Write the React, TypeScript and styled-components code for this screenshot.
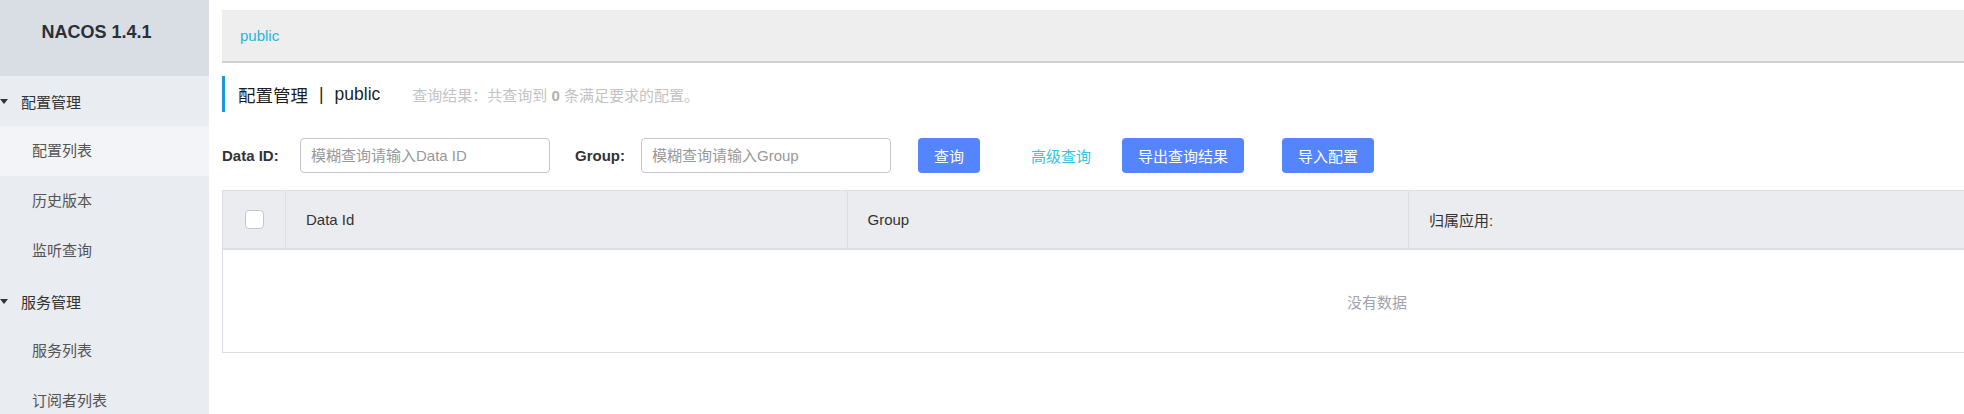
import React from 'react';
import styled, { createGlobalStyle } from 'styled-components';

const menu = [
  {
    title: '配置管理',
    items: [
      { name: '配置列表', active: true },
      { name: '历史版本' },
      { name: '监听查询' },
    ],
  },
  {
    title: '服务管理',
    items: [{ name: '服务列表' }, { name: '订阅者列表' }],
  },
];

// last column (operations) sits past the right edge of the window, left blank
const columns = ['Data Id', 'Group', '归属应用:', ''];

const App = () => {
  return (
    <Layout>
      <GlobalStyle />
      <Sidebar>
        <Brand>NACOS 1.4.1</Brand>
        {menu.map(group => (
          <React.Fragment key={group.title}>
            <MenuGroup>
              <Caret />
              {group.title}
            </MenuGroup>
            {group.items.map((item: { name: string; active?: boolean }) => (
              <MenuItem key={item.name} $active={item.active}>
                {item.name}
              </MenuItem>
            ))}
          </React.Fragment>
        ))}
      </Sidebar>

      <Main>
        <Breadcrumb>
          <BreadcrumbLink>public</BreadcrumbLink>
        </Breadcrumb>

        <PageTitle>
          <span>配置管理</span>
          <TitleSep>|</TitleSep>
          <span>public</span>
          <Summary>
            查询结果：共查询到 <strong>0</strong> 条满足要求的配置。
          </Summary>
        </PageTitle>

        <Filter>
          <FieldLabel $width={78}>Data ID:</FieldLabel>
          <Input placeholder="模糊查询请输入Data ID" $gap={25} />
          <FieldLabel $width={66}>Group:</FieldLabel>
          <Input placeholder="模糊查询请输入Group" $gap={27} />
          <Button $gap={51}>查询</Button>
          <TextLink $gap={31}>高级查询</TextLink>
          <Button $gap={38}>导出查询结果</Button>
          <Button>导入配置</Button>
        </Filter>

        <Table>
          <colgroup>
            <col style={{ width: 63 }} />
            {columns.map((c, i) => (
              <col key={i} />
            ))}
          </colgroup>
          <thead>
            <tr>
              <HeadCell>
                <Checkbox />
              </HeadCell>
              {columns.map((c, i) => (
                <HeadCell key={i}>{c}</HeadCell>
              ))}
            </tr>
          </thead>
          <tbody>
            <tr>
              <EmptyCell colSpan={columns.length + 1}>没有数据</EmptyCell>
            </tr>
          </tbody>
        </Table>
      </Main>
    </Layout>
  );
};

const GlobalStyle = createGlobalStyle`
  html, body {
    margin: 0;
    padding: 0;
    overflow: hidden;
    background: #fff;
    font-family: "Liberation Sans", "Noto Sans CJK SC", sans-serif;
  }
`;

const Layout = styled.div`
  display: flex;
  height: 414px;
  overflow: hidden;
`;

const Sidebar = styled.aside`
  width: 209px;
  flex-shrink: 0;
  background: #e9ecf1;
`;

const Brand = styled.div`
  height: 76px;
  box-sizing: border-box;
  padding: 22px 16px 0 0;
  line-height: 21px;
  text-align: center;
  font-size: 18px;
  font-weight: bold;
  color: #2b2f36;
  background: #d9dee5;
`;

const MenuGroup = styled.div`
  display: flex;
  align-items: center;
  height: 50px;
  font-size: 15px;
  color: #333;
`;

const Caret = styled.span`
  width: 0;
  height: 0;
  margin-right: 13px;
  border-left: 4.5px solid transparent;
  border-right: 4.5px solid transparent;
  border-top: 5px solid #333;
`;

const MenuItem = styled.div<{ $active?: boolean }>`
  height: 50px;
  line-height: 50px;
  padding-left: 32px;
  font-size: 15px;
  color: #555;
  background: ${p => (p.$active ? '#f3f4f7' : 'transparent')};
`;

const Main = styled.main`
  flex: 1;
  min-width: 0;
  padding: 10px 0 0 13px;
`;

const Breadcrumb = styled.div`
  width: 2400px;
  height: 51px;
  padding-left: 18px;
  display: flex;
  align-items: center;
  background: #eee;
  border-bottom: 2px solid #d0d0d0;
`;

const BreadcrumbLink = styled.a`
  font-size: 15px;
  color: #26b6dc;
  cursor: pointer;
`;

const PageTitle = styled.div`
  display: flex;
  align-items: center;
  height: 36px;
  margin-top: 13px;
  padding-left: 13px;
  border-left: 3px solid #1a9bd7;
  font-size: 17.5px;
  color: #1f1f1f;
`;

const TitleSep = styled.span`
  margin: 0 11px;
`;

const Summary = styled.span`
  margin-left: 32px;
  font-size: 15px;
  color: #c3c3c3;

  strong {
    color: #b0b0b0;
  }
`;

const Filter = styled.div`
  display: flex;
  align-items: center;
  margin-top: 26px;
  height: 35px;
`;

const FieldLabel = styled.label<{ $width: number }>`
  width: ${p => p.$width}px;
  flex-shrink: 0;
  font-size: 15px;
  font-weight: bold;
  color: #333;
`;

const Input = styled.input<{ $gap?: number }>`
  width: 250px;
  height: 35px;
  box-sizing: border-box;
  margin-right: ${p => p.$gap || 0}px;
  padding: 0 10px;
  border: 1px solid #c4c6cf;
  border-radius: 4px;
  font-family: inherit;
  font-size: 15px;
  color: #333;
  outline: none;

  &::placeholder {
    color: #999;
  }
`;

const Button = styled.button<{ $gap?: number }>`
  height: 35px;
  padding: 0 16px;
  margin-right: ${p => p.$gap || 0}px;
  border: none;
  border-radius: 4px;
  background: #5584ff;
  color: #fff;
  font-family: inherit;
  font-size: 15px;
  cursor: pointer;
`;

const TextLink = styled.a<{ $gap?: number }>`
  margin-right: ${p => p.$gap || 0}px;
  font-size: 15px;
  color: #33c3e3;
  cursor: pointer;
`;

const Table = styled.table`
  width: 2310px;
  margin-top: 17px;
  border-collapse: collapse;
  table-layout: fixed;
  border: 1px solid #dcdee3;
  font-size: 15px;
`;

const HeadCell = styled.th`
  height: 57px;
  padding: 0 0 0 20px;
  text-align: left;
  font-weight: normal;
  color: #333;
  background: #ebecf0;
  border-right: 1px solid #dcdee3;
  border-bottom: 2px solid #dcdee3;

  &:first-child {
    padding: 0;
    text-align: center;
  }
`;

const Checkbox = styled.span`
  display: inline-block;
  vertical-align: middle;
  width: 19px;
  height: 19px;
  box-sizing: border-box;
  border: 1px solid #c4c6cf;
  border-radius: 4px;
  background: #fff;
`;

const EmptyCell = styled.td`
  height: 100px;
  text-align: center;
  color: #a0a2ad;
`;

export default App;
